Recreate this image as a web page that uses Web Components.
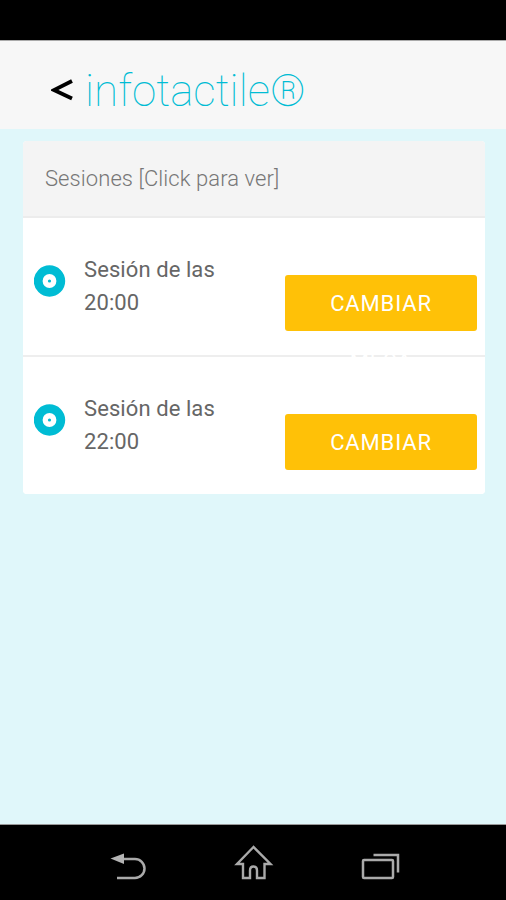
<!DOCTYPE html>
<html lang="es"><head><meta charset="utf-8"><title>infotactile</title>
<style>html,body{margin:0;height:100%}body{overflow:hidden;font-family:Roboto,"Noto Sans",sans-serif}</style></head>
<body><info-app></info-app>
<script>
const define = (name, html) => customElements.define(name, class extends HTMLElement {
  constructor() { super(); this.attachShadow({mode: 'open'}).innerHTML = html; }
});
define('status-bar', `<style>:host{display:block;height:41px;background:#000;flex:none;border-bottom:1px solid #aaa;box-sizing:border-box}</style>`);
define('app-header', `<style>
:host{display:flex;align-items:center;height:88px;flex:none;background:#f7f7f7;padding-left:51px;box-sizing:border-box}
svg{width:22px;height:24px;margin:10px 12px 0 0;flex:none}
h1{margin:11px 0 0;font-weight:100;font-size:44px;line-height:52px;color:#00bcd4;white-space:nowrap}
</style><svg viewBox="0 0 22 24"><path d="M21 3 3 12l18 8.500" fill="none" stroke="#000" stroke-width="3.800"/></svg><h1><slot></slot></h1>`);
define('session-list', `<style>
:host{display:block;margin:12px 21px 0 23px;background:#fff;border-radius:4px;overflow:hidden}
header{height:77px;box-sizing:border-box;background:#f4f4f4;border-bottom:2px solid #ececec;padding-left:22px;font-weight:300;font-size:22px;line-height:76px;color:#777;letter-spacing:.08px}
</style><header><slot name="title"></slot></header><slot></slot>`);
define('cambiar-button', `<style>
:host{display:block;box-sizing:border-box;width:192px;height:56px;border-radius:3px;background:#ffc107;color:#fff;font-weight:400;font-size:22px;letter-spacing:.85px;line-height:58px;text-align:center}
</style><slot></slot>`);
define('session-item', `<style>
:host{display:flex;height:137px;box-sizing:border-box;background:#fff;padding-left:11px}
:host([divided]){height:139px;border-bottom:2px solid #eee}
svg{width:32px;height:32px;margin-top:47px;flex:none}
p{margin:35px 0 0 18px;width:160px;font-size:22px;line-height:33px;color:#666;letter-spacing:.08px;font-weight:400}
cambiar-button{margin:57px 8px 0 auto}
</style><svg viewBox="0 0 32 32"><circle cx="15.500" cy="16" r="11.300" fill="#fff" stroke="#00bcd4" stroke-width="8.800"/><circle cx="15.500" cy="16" r="1.600" fill="#00bcd4"/></svg>
<p><slot></slot></p><cambiar-button><slot name="action"></slot></cambiar-button>`);
define('nav-bar', `<style>
:host{display:block;height:76px;flex:none;background:#000;border-top:1px solid #999;box-sizing:border-box}
svg{display:block}
</style><svg width="506" height="75" viewBox="0 824.500 506 75" fill="none" stroke="#aaa" stroke-width="2.500">
<path d="M118 858.500h17a9.500 9.500 0 0 1 0 19h-18"/><path d="M110.500 858l13.500-5v10.500z" fill="#b4b4b4" stroke="none"/>
<path d="M253.500 846.500 237 863.500h6v14h7V870q0-4 3.500-4t3.500 4v7.500h7.500v-14h6z" stroke-width="2.400"/>
<rect x="363" y="859.500" width="30" height="18" rx="1"/><path d="M373.500 854.500H398V872"/></svg>`);
define('info-app', `<style>
:host{display:flex;flex-direction:column;width:506px;height:900px;background:#e0f7fa}
main{flex:1}
</style><status-bar></status-bar><app-header>infotactile®</app-header>
<main><session-list><span slot="title">Sesiones [Click para ver]</span>
<session-item divided>Sesión de las<br>20:00<span slot="action">CAMBIAR<br>MESA</span></session-item>
<session-item>Sesión de las<br>22:00<span slot="action">CAMBIAR</span></session-item></session-list></main><nav-bar></nav-bar>`);
</script></body></html>
